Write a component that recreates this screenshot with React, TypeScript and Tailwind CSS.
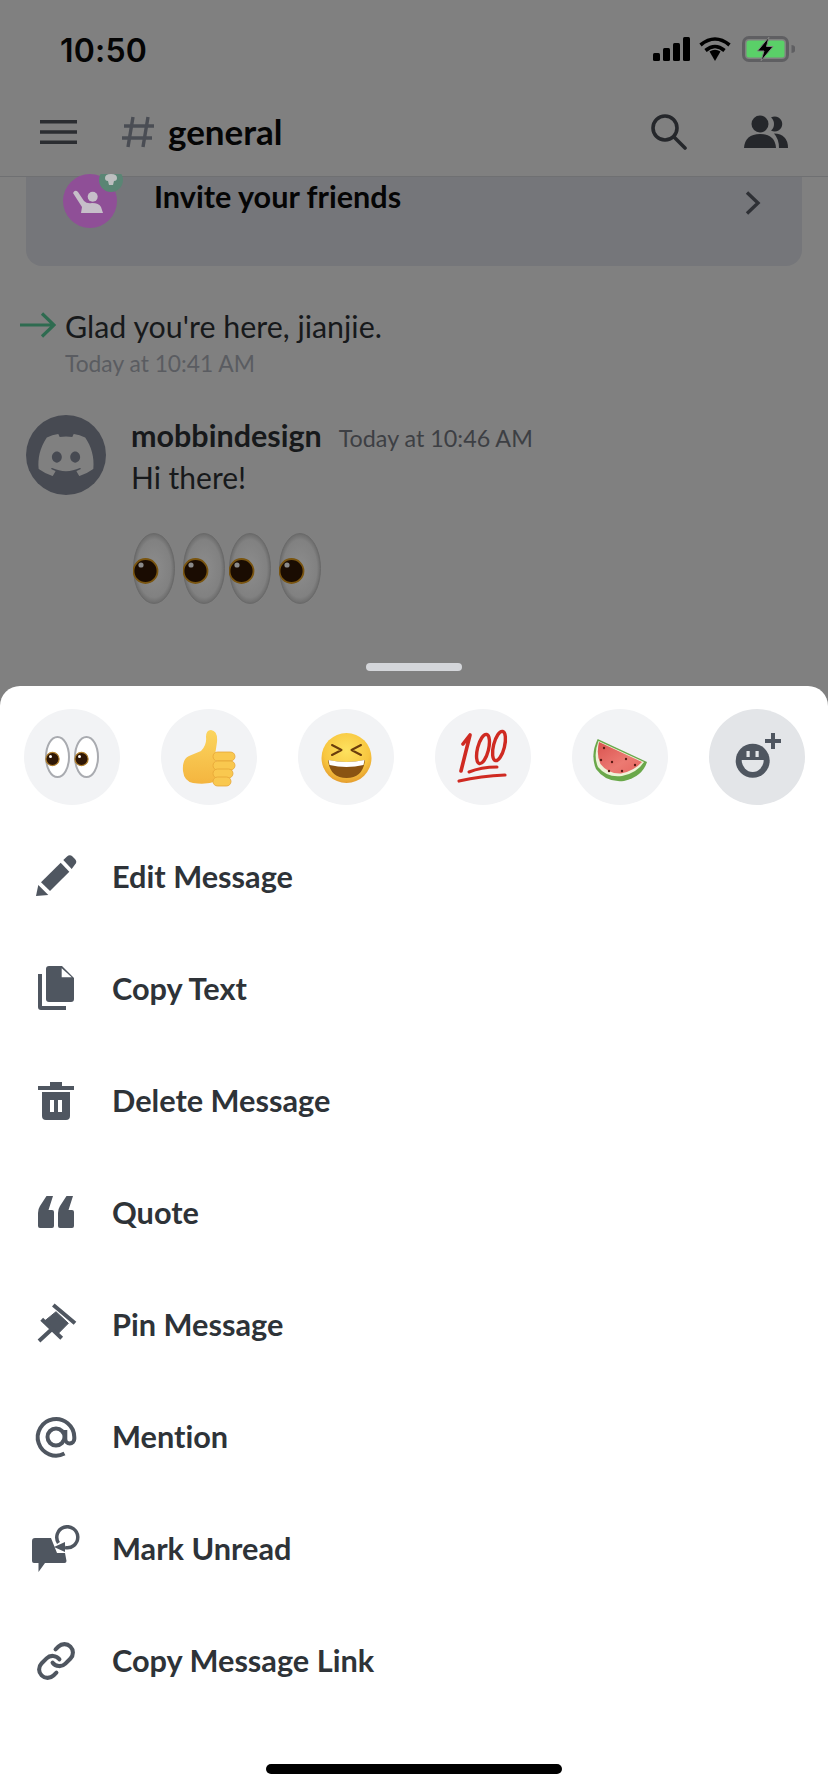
import { FaDiscord } from "react-icons/fa6";

const ic = "#4f5660";

function Pencil() {
  return (
    <svg width="48" height="48" viewBox="0 0 48 48" fill={ic}>
      <path d="M9 29.3 28.7 9.7 37.3 18.7 18 38Z" />
      <path d="M4 43 6.3 32 16.3 42Z" />
      <path d="M31.3 7 35 3.5a4 4 0 0 1 5.5 0L43 6a4 4 0 0 1 0 5.5L39.7 16Z" />
    </svg>
  );
}
function Copy() {
  return (
    <svg width="48" height="48" viewBox="0 0 48 48" fill={ic}>
      <path d="M17 1H30L42 13V34a3 3 0 0 1-3 3H17a3 3 0 0 1-3-3V4a3 3 0 0 1 3-3Z" />
      <path d="M29.700 3.300V12.300H39.700Z" fill="#fff" />
      <path d="M6 9h4V41H34v4H9a3 3 0 0 1-3-3Z" />
    </svg>
  );
}
function Trash() {
  return (
    <svg width="48" height="48" viewBox="0 0 48 48" fill={ic}>
      <path d="M18 5H30V9H42V13H6V9H18Z" />
      <path fillRule="evenodd" d="M10 15H38V39a4 4 0 0 1-4 4H14a4 4 0 0 1-4-4ZM18 23V35H22V23ZM26 23V35H30V23Z" />
    </svg>
  );
}
function Quote() {
  const d = (x: number) =>
    `M${x + 8.5} 7H${x + 15}L${x + 10.5} 21H${x + 14}a2 2 0 0 1 2 2V37a2 2 0 0 1-2 2H${x + 2}a2 2 0 0 1-2-2V24Q${x} 20 ${x + 2} 17Z`;
  return (
    <svg width="48" height="48" viewBox="0 0 48 48" fill={ic}>
      <path d={d(6)} />
      <path d={d(26)} />
    </svg>
  );
}
function Pin() {
  return (
    <svg width="48" height="48" viewBox="0 0 48 48" fill={ic} stroke={ic}>
      <path d="M24 10.7 36.3 22.3 24.7 34 13 19.7Z" strokeWidth="1" />
      <path d="M21.3 4 43 22.3M9.7 18.3 29.7 37.3M20 28 7 40" strokeWidth="4" fill="none" />
    </svg>
  );
}
function At() {
  return (
    <svg width="48" height="48" viewBox="0 0 48 48" fill="none" stroke={ic} strokeWidth="4">
      <path d="M32.5 40.5A18.3 18.3 0 1 1 42.3 24V26a4.5 4.5 0 0 1-9 0V17" />
      <circle cx="24" cy="24" r="8.5" />
    </svg>
  );
}
function Unread() {
  return (
    <svg width="48" height="48" viewBox="0 0 48 48" fill={ic}>
      <path d="M3 13H19L25 28H33L34.5 36a2 2 0 0 1-2 2H13L6.5 47V38H2a2 2 0 0 1-2-2V16a3 3 0 0 1 3-3Z" />
      <path d="M26.5 18A10.5 10.5 0 1 1 33 22.5" fill="none" stroke={ic} strokeWidth="3.5" />
      <path d="M22 22 33 17V27Z" />
    </svg>
  );
}
function LinkIcon() {
  return (
    <svg width="48" height="48" viewBox="0 0 48 48" fill="none" stroke={ic} strokeLinecap="round" strokeLinejoin="round">
      <g transform="translate(3.6 3.6) scale(1.7)">
        <path d="M10 13a5 5 0 0 0 7.54.54l3-3a5 5 0 0 0-7.07-7.07l-1.72 1.71" strokeWidth="2.4" />
        <path d="M14 11a5 5 0 0 0-7.54-.54l-3 3a5 5 0 0 0 7.07 7.07l1.71-1.71" strokeWidth="2.4" />
      </g>
    </svg>
  );
}

function EyesEmoji() {
  return (
    <svg width="96" height="96" viewBox="0 0 96 96">
      {[33.5, 62.5].map((x) => (
        <g key={x}>
          <ellipse cx={x} cy="48" rx="11.5" ry="20" fill="#fff" stroke="#a9abb0" strokeWidth="2" />
          <circle cx={x - 5} cy="50" r="6.6" fill="#2f1705" stroke="#b07f2e" strokeWidth="1.2" />
          <circle cx={x - 7} cy="47.5" r="1.5" fill="#fff" />
        </g>
      ))}
    </svg>
  );
}
function ThumbEmoji() {
  return (
    <svg width="96" height="96" viewBox="0 0 96 96">
      <defs>
        <linearGradient id="th" x1="0" y1="0" x2="0" y2="1">
          <stop offset="0" stopColor="#fbd55f" />
          <stop offset="1" stopColor="#f4b53f" />
        </linearGradient>
      </defs>
      <path d="M22 62Q21 50 28 47L40 42Q46 36 45 28Q45 21 50 21Q57 22 56 33Q55 40 54 46L56 72Q46 76 32 74Q23 72 22 62Z" fill="url(#th)" />
      {[
        [43, 74],
        [52, 74],
        [60, 72],
        [68, 70],
      ].map(([y, r]) => (
        <rect key={y} x="52" y={y} width={r - 52} height="9" rx="4.5" fill="#f9c84f" stroke="#e6a436" strokeWidth="0.8" />
      ))}
    </svg>
  );
}
function LaughEmoji() {
  return (
    <svg width="96" height="96" viewBox="0 0 96 96">
      <defs>
        <radialGradient id="fa" cx="0.5" cy="0.35" r="0.7">
          <stop offset="0" stopColor="#fde25f" />
          <stop offset="0.65" stopColor="#f8c63f" />
          <stop offset="1" stopColor="#e0922a" />
        </radialGradient>
      </defs>
      <circle cx="48.5" cy="49" r="25" fill="url(#fa)" />
      <path d="M34 36 43.500 41 34 46M63 36 53.500 41 63 46" fill="none" stroke="#6b3d0c" strokeWidth="2" strokeLinecap="round" strokeLinejoin="round" />
      <path d="M30 51Q48.500 55 67 51Q65 69 48.500 69Q32 69 30 51Z" fill="#8a5312" />
      <path d="M30.500 51Q48.500 55 66.500 51L65.500 56Q48.500 60 31.500 56Z" fill="#fff" />
    </svg>
  );
}
function HundredEmoji() {
  return (
    <svg width="96" height="96" viewBox="0 0 96 96" fill="none" stroke="#cf2a22" strokeLinecap="round">
      <path d="M28 35 35 26 26 62" strokeWidth="3.6" strokeLinejoin="round" />
      <ellipse cx="48" cy="40" rx="5.5" ry="15" transform="rotate(14 48 40)" strokeWidth="3.4" />
      <ellipse cx="64" cy="37" rx="5.5" ry="15" transform="rotate(14 64 37)" strokeWidth="3.4" />
      <path d="M34 63Q46 58 62 58" strokeWidth="3" />
      <path d="M24 72Q46 67 70 66" strokeWidth="3.2" />
    </svg>
  );
}
function MelonEmoji() {
  return (
    <svg width="96" height="96" viewBox="0 0 96 96">
      <defs>
        <linearGradient id="mel" x1="0" y1="0" x2="1" y2="1">
          <stop offset="0" stopColor="#d9534f" />
          <stop offset="0.6" stopColor="#ec7a72" />
          <stop offset="1" stopColor="#e5655f" />
        </linearGradient>
      </defs>
      <path d="M25.700 30 75 53Q70 68 52 72Q34 74 24 60Q18 46 25.700 30Z" fill="#6aa84a" />
      <path d="M26.500 32 72 53Q65 64 50 67Q35 69 26 58Q21 46 26.500 32Z" fill="#eef2d8" />
      <path d="M27 33 70 53Q62 62 49 64.500Q36 65 28.500 55Q24 46 27 33Z" fill="url(#mel)" />
      {[
        [32, 39],
        [40, 53],
        [29, 51],
        [54, 50],
        [37, 62],
        [50, 62],
        [63, 56],
      ].map(([x, y]) => (
        <circle key={x * y} cx={x} cy={y} r="1.200" fill="#5a1a14" />
      ))}
    </svg>
  );
}
function AddReaction() {
  return (
    <svg width="96" height="96" viewBox="0 0 96 96">
      <circle cx="43.700" cy="51.700" r="17" fill={ic} />
      <rect x="37.500" y="42" width="3.200" height="6" fill="#e3e5e8" />
      <rect x="46.500" y="42" width="3.200" height="6" fill="#e3e5e8" />
      <path d="M32.700 51H54.700A11 12 0 0 1 32.700 51Z" fill="#e3e5e8" />
      <path d="M64 24V40M56 32H72" stroke={ic} strokeWidth="4" />
    </svg>
  );
}

function BigEye() {
  return (
    <svg width="42" height="71" viewBox="0 0 42 71">
      <defs>
        <radialGradient id="be" cx="0.5" cy="0.5" r="0.55">
          <stop offset="0" stopColor="#8c8c8c" />
          <stop offset="0.75" stopColor="#818181" />
          <stop offset="1" stopColor="#5f5f5f" />
        </radialGradient>
      </defs>
      <ellipse cx="21" cy="35.500" rx="20.500" ry="35" fill="url(#be)" stroke="#6a6a6a" strokeWidth="1" />
      <circle cx="12.500" cy="38" r="12" fill="#1a0c02" stroke="#7a5510" strokeWidth="1.800" />
      <circle cx="8" cy="32" r="2.600" fill="#8a8a8a" />
    </svg>
  );
}

const rows: [string, () => React.ReactElement][] = [
  ["Edit Message", Pencil],
  ["Copy Text", Copy],
  ["Delete Message", Trash],
  ["Quote", Quote],
  ["Pin Message", Pin],
  ["Mention", At],
  ["Mark Unread", Unread],
  ["Copy Message Link", LinkIcon],
];

const reactions = [EyesEmoji, ThumbEmoji, LaughEmoji, HundredEmoji, MelonEmoji];

export default function App() {
  return (
    <div className="w-[828px] h-[1792px] bg-[#808080] overflow-hidden flex flex-col font-['Lato',sans-serif] [font-variant-ligatures:none]">
      <div className="h-[686px] shrink-0 flex flex-col overflow-hidden">
        {/* status bar */}
        <div className="h-[88px] shrink-0 flex items-center justify-between pl-[60px] pr-[33px] pt-[10px]">
          <span className="font-['Inter',sans-serif] font-semibold text-[32px] leading-none tracking-[0.2px] text-[#050505] mt-[3px]">10:50</span>
          <div className="flex items-center">
            <svg width="37" height="24" viewBox="0 0 37 24" fill="#000" className="mr-[9px]">
              <rect x="0" y="16" width="7" height="8" rx="1.5" />
              <rect x="10" y="11" width="7" height="13" rx="1.5" />
              <rect x="20" y="6" width="7" height="18" rx="1.5" />
              <rect x="30" y="0" width="7" height="24" rx="1.5" />
            </svg>
            <svg width="32" height="24" viewBox="0 0 32 24" fill="none" stroke="#000" strokeWidth="3.6" className="mr-[11px]">
              <path d="M1.5 8Q16-4 30.5 8" />
              <path d="M6.500 13.500Q16 5.500 25.500 13.500" />
              <path d="M10.500 14.500Q16 11 21.500 14.500L16 24Z" fill="#000" stroke="none" />
            </svg>
            <svg width="53" height="26" viewBox="0 0 53 26">
              <rect x="1.500" y="1.500" width="44" height="23" rx="5.500" fill="none" stroke="#5f5f62" strokeWidth="3" />
              <rect x="4.500" y="4.500" width="38" height="17" rx="2.500" fill="#5ad068" />
              <path d="M49.500 9a4 4 0 0 1 0 8Z" fill="#5f5f62" />
              <path d="M27 1 15.500 15H22L19 25 31 10.500H24.500Z" fill="#000" stroke="#808080" strokeWidth="1" />
            </svg>
          </div>
        </div>
        {/* channel header */}
        <div className="h-[89px] shrink-0 flex items-center border-b border-[#6f7072] pl-[40px] pr-[40px]">
          <svg width="37" height="24" viewBox="0 0 37 24" fill="#2b2d31" className="mr-[44px]">
            <rect width="37" height="3.500" />
            <rect y="10.250" width="37" height="3.500" />
            <rect y="20.500" width="37" height="3.500" />
          </svg>
          <svg width="34" height="32" viewBox="0 0 34 32" fill="none" stroke="#4a4d54" strokeWidth="3.400" className="mr-[13px]">
            <path d="M12 1 7 31M27 1 22 31M3 10H33M1 22H31" />
          </svg>
          <span className="font-bold text-[35px] leading-none text-[#050505] -mt-[2px]">general</span>
          <div className="ml-auto flex items-center">
            <svg width="36" height="36" viewBox="0 0 36 36" fill="none" stroke="#25272b" strokeWidth="3.600" className="mr-[57px]">
              <circle cx="14" cy="14" r="12" />
              <path d="M23 23 34 34" strokeLinecap="round" />
            </svg>
            <svg width="44" height="34" viewBox="0 0 44 34" fill="#25272b">
              <circle cx="16" cy="9" r="8.500" />
              <path d="M0 33Q1 19 16 19Q31 19 32 33Z" />
              <path d="M27 2.500a7.500 7.500 0 1 1 0 13Q30 13 30 9Q30 5 27 2.500Z" />
              <path d="M30 18.500Q44 19 44 33H35Q35 24 30 18.500Z" />
            </svg>
          </div>
        </div>
        {/* card */}
        <div className="mx-[26px] h-[89px] shrink-0 rounded-b-[16px] bg-[#75767a] flex items-start pl-[37px] pr-[41px] relative">
          <svg width="64" height="54" viewBox="0 0 64 54" className="absolute left-[37px] -top-[3px]">
            <circle cx="27" cy="27" r="27" fill="#8f4f97" />
            <circle cx="29.700" cy="22.700" r="5" fill="#c6bfc9" />
            <path d="M10 19Q12 15 15 18L21 27Q24 30 29 29Q36 29 38 33L40 39H18L19 33Z" fill="#c6bfc9" />
            <circle cx="48" cy="6" r="12" fill="#5a8574" />
            <path d="M42 4q0-4 6-4t6 4q0 3-3 3l-1 4h-4l-1-4q-3 0-3-3Z" fill="#bdbfc0" />
          </svg>
          <span className="ml-[91px] mt-[2px] font-bold text-[30.600px] leading-[36px] text-[#050505]">Invite your friends</span>
          <svg width="16" height="24" viewBox="0 0 16 24" fill="none" stroke="#2e3035" strokeWidth="3.400" className="ml-auto mt-[14px]">
            <path d="M2 1.500 13 12 2 22.500" />
          </svg>
        </div>
        {/* join message */}
        <div className="flex items-start pl-[20px] mt-[42px]">
          <svg width="36" height="26" viewBox="0 0 36 26" fill="none" stroke="#2e6b50" strokeWidth="3.200" className="mt-[4px] mr-[9px]">
            <path d="M0 13H34M22 1.500 34 13 22 24.500" />
          </svg>
          <div className="flex flex-col">
            <span className="text-[30.400px] leading-[36px] text-[#17191b]">Glad you're here, jianjie.</span>
            <span className="text-[22.800px] leading-[30px] mt-[4px] text-[#5a5c61]">Today at 10:41 AM</span>
          </div>
        </div>
        {/* message */}
        <div className="flex items-start pl-[26px] mt-[37px]">
          <div className="w-[80px] h-[80px] rounded-full bg-[#474a52] flex items-center justify-center shrink-0">
            <FaDiscord size={60} color="#808080" />
          </div>
          <div className="ml-[25px] flex flex-col">
            <div className="flex items-baseline">
              <span className="font-bold text-[30.500px] leading-[40px] text-[#17191b]">mobbindesign</span>
              <span className="ml-[17px] text-[23.300px] leading-[40px] text-[#3d3f44]">Today at 10:46 AM</span>
            </div>
            <span className="text-[30px] leading-[40px] -mt-[1px] text-[#17191b]">Hi there!</span>
            <div className="flex mt-[36px] ml-[2px]">
              <BigEye />
              <div className="ml-[8px]">
                <BigEye />
              </div>
              <div className="ml-[4px]">
                <BigEye />
              </div>
              <div className="ml-[8px]">
                <BigEye />
              </div>
            </div>
          </div>
        </div>
        <div className="mt-[59px] self-center w-[96px] h-[8px] rounded-full bg-[#d4d6da]" />
      </div>

      {/* sheet */}
      <div className="flex-1 bg-white rounded-t-[20px] flex flex-col">
        <div className="flex pl-[24px] gap-[41px] pt-[23px]">
          {reactions.map((E, i) => (
            <div key={i} className="w-[96px] h-[96px] rounded-full bg-[#f2f3f5] shrink-0">
              <E />
            </div>
          ))}
          <div className="w-[96px] h-[96px] rounded-full bg-[#e3e5e8] shrink-0">
            <AddReaction />
          </div>
        </div>
        <div className="flex flex-col mt-[16px]">
          {rows.map(([label, Icon]) => (
            <div key={label} className="h-[112px] flex items-center pl-[32px] gap-[32px]">
              <Icon />
              <span className="font-bold text-[30.700px] leading-none text-[#2e3338]">{label}</span>
            </div>
          ))}
        </div>
        <div className="mt-[47px] self-center w-[296px] h-[10px] rounded-full bg-black" />
      </div>
    </div>
  );
}
